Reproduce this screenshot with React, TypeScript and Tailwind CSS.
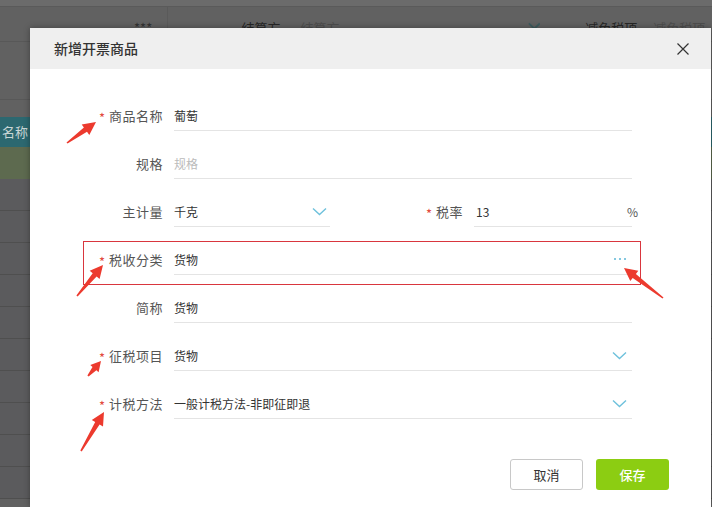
import React from "react";

type Pt = [number, number];

// red annotation arrow: tail -> tip, tapered shaft with a triangle head
const arrowPoints = (tail: Pt, tip: Pt, head = 13, headW = 6.5) => {
  const dx = tip[0] - tail[0];
  const dy = tip[1] - tail[1];
  const len = Math.hypot(dx, dy);
  const ux = dx / len;
  const uy = dy / len;
  const nx = -uy;
  const ny = ux;
  const neck: Pt = [tip[0] - ux * head, tip[1] - uy * head];
  const p = (b: Pt, w: number): string => `${(b[0] + nx * w).toFixed(1)},${(b[1] + ny * w).toFixed(1)}`;
  return [p(tail, 0.8), p(neck, 2.6), p(neck, headW), `${tip[0]},${tip[1]}`, p(neck, -headW), p(neck, -2.6), p(tail, -0.8)].join(" ");
};

const arrows: { tail: Pt; tip: Pt; head?: number; w?: number }[] = [
  { tail: [67, 143], tip: [96, 122] },
  { tail: [77, 296], tip: [103, 265] },
  { tail: [663, 298], tip: [624, 268] },
  { tail: [88, 376], tip: [101, 361], head: 10, w: 5.5 },
  { tail: [81, 451], tip: [104, 412] },
];

const Chevron = () => (
  <svg width="15" height="9" viewBox="0 0 15 9" className="shrink-0">
    <polyline points="1,1.5 7.5,7.5 14,1.5" fill="none" stroke="#6ec1dc" strokeWidth="1.4" />
  </svg>
);

function Label({ text, required, className = "w-[133px]" }: { text: string; required?: boolean; className?: string }) {
  return (
    <div className={`${className} shrink-0 flex justify-end items-center text-[13px] text-[#555]`}>
      {required && <span className="text-[#e2493d] mr-[4px] mt-[3px] text-[13px]">*</span>}
      <span className="tracking-[0.5px]">{text}</span>
    </div>
  );
}

function Field({ className, children }: { className: string; children: React.ReactNode }) {
  return (
    <div className={`${className} h-[30px] shrink-0 border-b border-[#e4e4e4] flex items-center justify-between text-[12px] text-[#333]`}>
      {children}
    </div>
  );
}

function Row({ children }: { children: React.ReactNode }) {
  return <div className="h-[48px] flex items-center gap-[11px]">{children}</div>;
}

export default function App() {
  return (
    <div className="relative w-[712px] h-[507px] overflow-hidden bg-[#616161] font-['Noto_Sans_CJK_SC','Noto_Sans',sans-serif]">
      {/* dimmed page behind the dialog */}
      <div className="flex flex-col">
        <div className="h-[7px] bg-[#6b6b6b] border-b border-[#5a5a5a]" />
        <div className="h-[35px] border-b border-[#585858] flex items-start pt-[11px] text-[13px] text-[#262626]">
          <span className="ml-[134px] w-[36px] text-[#333]">***</span>
          <div className="w-px h-[30px] -mt-[11px] bg-[#5a5a5a]" />
          <span className="ml-[74px]">结算方式</span>
          <span className="ml-[12px] text-[#4d4d4d]">结算方式</span>
          <svg width="14" height="9" viewBox="0 0 14 9" className="ml-[180px] mt-[4px]">
            <polyline points="1,1 7,7 13,1" fill="none" stroke="#3d5b5e" strokeWidth="2" />
          </svg>
          <span className="ml-[45px]">减免税项目</span>
          <span className="ml-[9px] text-[#4d4d4d]">减免税项目</span>
        </div>
        <div className="h-[58px] border-b border-[#585858]" />
        <div className="h-[17px]" />
        <div className="h-[30px] bg-[#2c6870] flex items-center text-[13px] text-[#c9d6d6]">
          <span className="ml-[2px]">名称</span>
        </div>
        <div className="h-[32px] bg-[#5d6a4f]" />
        {Array.from({ length: 10 }).map((_, i) => (
          <div key={i} className="h-[32px] border-b border-[#4f4f4f] bg-[#5b5b5d]" />
        ))}
      </div>

      {/* dialog */}
      <div className="absolute left-[30px] top-[28px] w-[681px] h-[479px] bg-white shadow-[0_0_6px_rgba(0,0,0,0.35)]">
        <div className="h-[41px] bg-[#efefef] flex items-center justify-between pl-[24px] pr-[22px]">
          <span className="text-[14px] font-medium text-[#333]">新增开票商品</span>
          <svg width="12" height="12" viewBox="0 0 12 12">
            <path d="M0.5 0.5 L11.5 11.5 M11.5 0.5 L0.5 11.5" stroke="#333" strokeWidth="1.2" />
          </svg>
        </div>

        <div className="pt-[23px]">
          <Row>
            <Label text="商品名称" required />
            <Field className="w-[458px]">
              <span>葡萄</span>
            </Field>
          </Row>
          <Row>
            <Label text="规格" />
            <Field className="w-[458px]">
              <span className="text-[#bbb]">规格</span>
            </Field>
          </Row>
          <Row>
            <Label text="主计量" />
            <Field className="w-[156px] pr-[3px]">
              <span>千克</span>
              <Chevron />
            </Field>
            <Label text="税率" required className="w-[122px]" />
            <Field className="w-[158px]">
              <span className="pl-[2px]">13</span>
              <span className="-mr-[6px] text-[#555]">%</span>
            </Field>
          </Row>
          <Row>
            <Label text="税收分类" required />
            <Field className="w-[458px] pr-[6px]">
              <span>货物</span>
              <span className="flex gap-[3px] -mt-[2px]">
                <i className="block w-[2px] h-[2px] rounded-full bg-[#5bb6d6]" />
                <i className="block w-[2px] h-[2px] rounded-full bg-[#5bb6d6]" />
                <i className="block w-[2px] h-[2px] rounded-full bg-[#5bb6d6]" />
              </span>
            </Field>
          </Row>
          <Row>
            <Label text="简称" />
            <Field className="w-[458px]">
              <span>货物</span>
            </Field>
          </Row>
          <Row>
            <Label text="征税项目" required />
            <Field className="w-[458px] pr-[5px]">
              <span>货物</span>
              <Chevron />
            </Field>
          </Row>
          <Row>
            <Label text="计税方法" required />
            <Field className="w-[458px] pr-[5px]">
              <span>一般计税方法-非即征即退</span>
              <Chevron />
            </Field>
          </Row>

          <div className="mt-[31px] flex justify-end gap-[13px] pr-[42px]">
            <button className="w-[73px] h-[31px] rounded-[3px] border border-[#c8c8c8] bg-white text-[13px] text-[#333]">取消</button>
            <button className="w-[73px] h-[31px] rounded-[3px] bg-[#8ccd12] text-[13px] font-medium text-white">保存</button>
          </div>
        </div>

        {/* highlight around 税收分类 */}
        <div className="absolute left-[53px] top-[213px] w-[558px] h-[44px] border border-[#d9363e]" />
      </div>

      {/* annotation arrows */}
      <svg className="absolute inset-0 pointer-events-none" width="712" height="507">
        {arrows.map((a, i) => (
          <polygon key={i} points={arrowPoints(a.tail, a.tip, a.head, a.w)} fill="#ec3a2e" />
        ))}
      </svg>
    </div>
  );
}
